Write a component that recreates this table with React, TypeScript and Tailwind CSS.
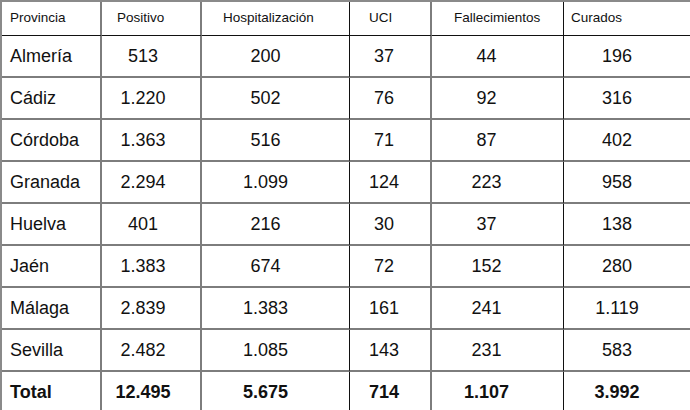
import React from "react";

const rows: [string, string, string, string, string, string][] = [
  ["Almería", "513", "200", "37", "44", "196"],
  ["Cádiz", "1.220", "502", "76", "92", "316"],
  ["Córdoba", "1.363", "516", "71", "87", "402"],
  ["Granada", "2.294", "1.099", "124", "223", "958"],
  ["Huelva", "401", "216", "30", "37", "138"],
  ["Jaén", "1.383", "674", "72", "152", "280"],
  ["Málaga", "2.839", "1.383", "161", "241", "1.119"],
  ["Sevilla", "2.482", "1.085", "143", "231", "583"],
];

const colBorder = [
  "border-r-2 border-r-[#7d7d7d]",
  "border-r-2 border-r-[#7d7d7d]",
  "border-r border-r-[#111]",
  "border-r-2 border-r-[#7d7d7d]",
  "border-r border-r-[#111]",
  "",
];

const numPad = ["pl-[8px]", "pr-[16px]", "pr-[20px]", "pr-[12px]", "pr-[22px]", "pr-[22px]"];
const headPad = ["pl-[8px]", "pl-[15px]", "pl-[21px]", "pl-[19px]", "pl-[22px]", "pl-[7px]"];
const headers = ["Provincia", "Positivo", "Hospitalización", "UCI", "Fallecimientos", "Curados"];

export default function App() {
  return (
    <div
      className="w-[690px] h-[410px] bg-white overflow-hidden text-[#111]"
      style={{ fontFamily: '"Liberation Sans", Arial, sans-serif' }}
    >
      <div className="grid grid-cols-[100px_100px_148px_82px_132px_128px] border-t-2 border-l-2 border-[#8a8a8a]">
        {headers.map((h, i) => (
          <div
            key={h}
            className={`h-[34px] flex items-center text-[13.5px] border-b border-b-[#111] ${colBorder[i]} ${headPad[i]}`}
          >
            {h}
          </div>
        ))}
        {rows.map((r) =>
          r.map((c, i) => (
            <div
              key={r[0] + i}
              className={`h-[42px] flex items-center text-[18px] border-b-2 border-b-[#7d7d7d] ${colBorder[i]} ${
                i === 0 ? "pl-[8px]" : `justify-center ${numPad[i]}`
              }`}
            >
              {c}
            </div>
          ))
        )}
        {["Total", "12.495", "5.675", "714", "1.107", "3.992"].map((c, i) => (
          <div
            key={"t" + i}
            className={`h-[40px] flex items-center text-[18px] font-bold ${colBorder[i]} ${
              i === 0 ? "pl-[8px]" : `justify-center ${numPad[i]}`
            }`}
          >
            {c}
          </div>
        ))}
      </div>
    </div>
  );
}
